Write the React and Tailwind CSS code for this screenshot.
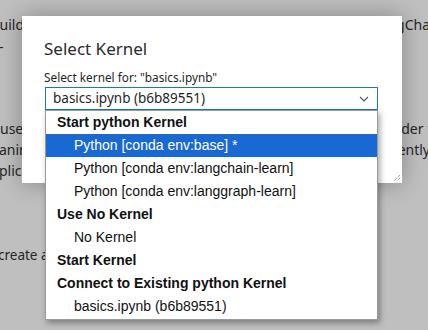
import React from 'react';

const items = [
  { label: 'Start python Kernel', header: true },
  { label: 'Python [conda env:base] *', active: true },
  { label: 'Python [conda env:langchain-learn]' },
  { label: 'Python [conda env:langgraph-learn]' },
  { label: 'Use No Kernel', header: true },
  { label: 'No Kernel' },
  { label: 'Start Kernel', header: true },
  { label: 'Connect to Existing python Kernel', header: true },
  { label: 'basics.ipynb (b6b89551)' },
];

const KernelList = () => (
  <div className="absolute left-[23px] top-[94px] w-[333px] h-[210px] bg-white border border-[#9b9b9b] shadow-[2px_3px_6px_rgba(0,0,0,0.35)] font-['Liberation_Sans',Arial,sans-serif] text-[14px] text-[#111]">
    {items.map((it) => (
      <div
        key={it.label}
        className={
          'h-[23px] flex items-center whitespace-nowrap ' +
          (it.header ? 'pl-[11px] font-bold ' : 'pl-[28px] ') +
          (it.active ? 'bg-[#1a68d2] text-white' : '')
        }
      >
        {it.label}
      </div>
    ))}
  </div>
);

export default function App() {
  return (
    <div className="relative w-[428px] h-[330px] overflow-hidden bg-[#bfbfbf] font-['Noto_Sans',sans-serif] text-[14px] text-[#262626]">
      {/* page behind the modal */}
      <div className="flex flex-col leading-[21px]">
        <div className="mt-[14px] flex justify-between whitespace-nowrap">
          <span className="-ml-[9px]">build</span>
          <span className="-mr-[2px]">gCha</span>
        </div>
        <div className="mt-[1px] -ml-[1px]">-</div>
        <div className="mt-[61px] flex justify-between whitespace-nowrap">
          <span>use</span>
          <span className="-mr-[4px]">der f</span>
        </div>
        <div className="flex justify-between whitespace-nowrap">
          <span className="-ml-[1px]">anin</span>
          <span className="-mr-[2px]">ently</span>
        </div>
        <div className="-ml-[1px]">plica</div>
        <div className="mt-[64px] -ml-[2px] text-[13.5px]">create a</div>
      </div>

      {/* modal */}
      <div className="absolute left-[22px] top-[16px] w-[380px] h-[167px] bg-white shadow-[0_0_22px_rgba(0,0,0,0.3)] pl-[22px] pt-[21px]">
        <div className="text-[17px] leading-[24px] text-[#2b2b2b]">Select Kernel</div>
        <div className="mt-[8px] text-[11.8px] leading-[16px] text-[#1f1f1f]">Select kernel for: "basics.ipynb"</div>
        <div className="mt-[2px] ml-[1px] w-[333px] h-[23px] border border-[#1a73d9] flex items-center justify-between pl-[7px] pr-[8px] text-[13.5px] text-[#1f1f1f]">
          <span>basics.ipynb (b6b89551)</span>
          <svg width="10" height="6" viewBox="0 0 10 6" fill="none">
            <path d="M1 1l4 4 4-4" stroke="#555" strokeWidth="1.2" />
          </svg>
        </div>
        <KernelList />
        <svg className="absolute right-[1px] bottom-[1px]" width="9" height="9" viewBox="0 0 9 9">
          <path d="M8 2L2 8M8 5L5 8" stroke="#777" strokeWidth="1" strokeDasharray="1 1" />
        </svg>
      </div>
    </div>
  );
}
